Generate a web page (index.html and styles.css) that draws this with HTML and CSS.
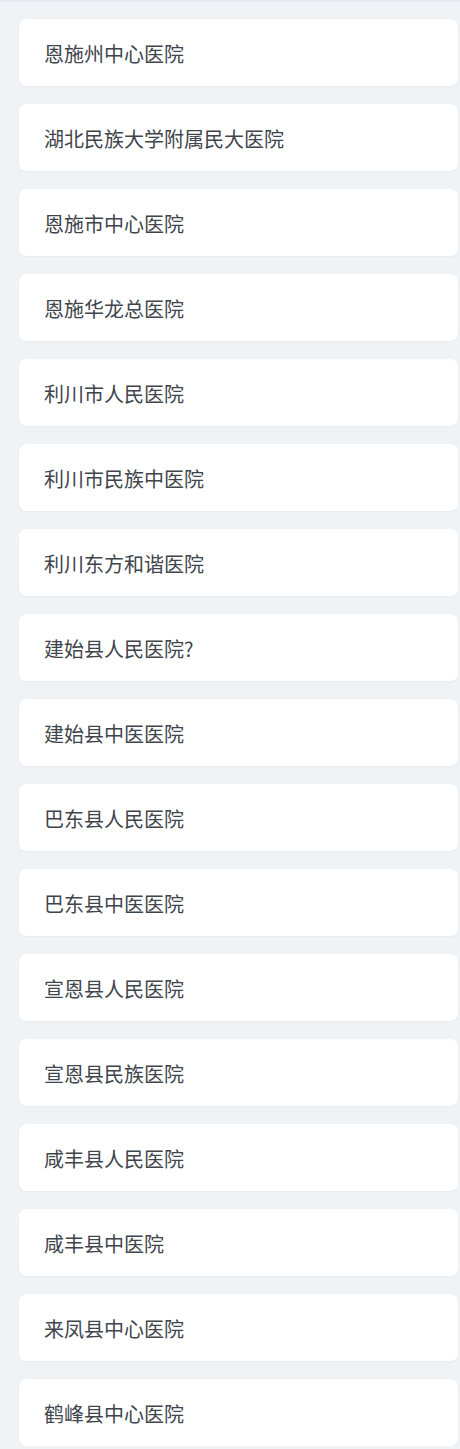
FILE: index.html
```html
<!DOCTYPE html>
<html lang="zh">
<head>
<meta charset="utf-8">
<link rel="stylesheet" href="styles.css">
</head>
<body>
<div class="topline"></div>
<ul class="list">
  <li class="card">恩施州中心医院</li>
  <li class="card">湖北民族大学附属民大医院</li>
  <li class="card">恩施市中心医院</li>
  <li class="card">恩施华龙总医院</li>
  <li class="card">利川市人民医院</li>
  <li class="card">利川市民族中医院</li>
  <li class="card">利川东方和谐医院</li>
  <li class="card">建始县人民医院?</li>
  <li class="card">建始县中医医院</li>
  <li class="card">巴东县人民医院</li>
  <li class="card">巴东县中医医院</li>
  <li class="card">宣恩县人民医院</li>
  <li class="card">宣恩县民族医院</li>
  <li class="card">咸丰县人民医院</li>
  <li class="card">咸丰县中医院</li>
  <li class="card">来凤县中心医院</li>
  <li class="card">鹤峰县中心医院</li>
</ul>
</body>
</html>
```
FILE: styles.css
```css
html, body {
  margin: 0;
  padding: 0;
  background: #eff3f6;
}
body {
  font-family: "Noto Sans CJK SC", "Noto Sans", sans-serif;
  color: #40454c;
}
.topline {
  height: 2px;
  background: #e6ebef;
}
.list {
  list-style: none;
  margin: 0;
  padding: 17px 2px 0 19px;
  display: flex;
  flex-direction: column;
  gap: 18px;
}
.card {
  height: 67px;
  box-sizing: border-box;
  background: #ffffff;
  border-radius: 7px;
  box-shadow: 0 0 1px rgba(0, 0, 0, 0.06), 0 1px 2px rgba(0, 0, 0, 0.03);
  display: flex;
  align-items: center;
  padding-left: 25px;
  padding-top: 2px;
  font-size: 20px;
  line-height: 1;
}
```
